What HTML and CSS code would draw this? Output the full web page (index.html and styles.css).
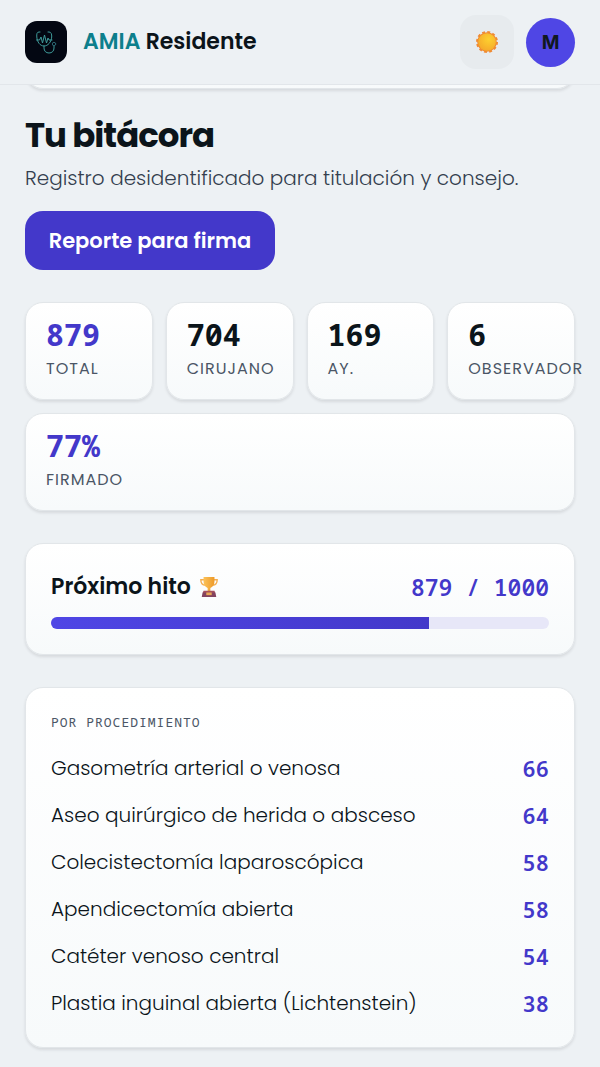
FILE: index.html
```
<!DOCTYPE html>
<html lang="es">
<head>
    <meta charset="UTF-8">
    <meta name="viewport" content="width=device-width, initial-scale=1.0">
    <title>AMIA Residente</title>
    <link rel="stylesheet" href="styles.css">
</head>
<body>
    <header class="topbar">
        <div class="brand">
            <span class="logo">
                <svg viewBox="0 0 42 42" width="42" height="42" fill="none" stroke="#3f9c9b" stroke-width="1" stroke-linecap="round" stroke-linejoin="round" aria-hidden="true">
                    <path d="M15 11h-1c-2 0-2.500 2-2.200 5 .4 5 3.200 9 7.200 9s7.300-4 7.700-9c.2-3-.7-5-2.700-5h-1"/>
                    <path d="M11.500 19h3l1.500-3 1.500 6 2-8 2 8 1.500-5 1 2h3"/>
                    <path d="M19 25v2c0 3 2 5 5 5s5-2 5-5v-2"/>
                    <circle cx="29" cy="23" r="1.700" stroke="#2b6570"/>
                </svg>
            </span>
            <span class="brand-name"><span class="brand-accent">AMIA</span> Residente</span>
        </div>
        <div class="actions">
            <button class="theme-button" type="button" aria-label="Cambiar tema">
                <svg viewBox="0 0 24 24" width="24" height="24" aria-hidden="true">
                    <defs>
                        <radialGradient id="sun" cx=".6" cy=".35" r=".7">
                            <stop offset="0" stop-color="#fdd02f"/>
                            <stop offset="1" stop-color="#f5a92a"/>
                        </radialGradient>
                    </defs>
                    <circle cx="12" cy="12" r="9.800" fill="#f08a32"/>
                    <circle cx="12" cy="12" r="9.700" fill="none" stroke="#f08a32" stroke-width="2.600" stroke-dasharray="2.800 2.280"/>
                    <circle cx="12" cy="12" r="8.800" fill="url(#sun)"/>
                </svg>
            </button>
            <button class="avatar" type="button">M</button>
        </div>
    </header>

    <main class="content">
        <div class="card last-card"></div>

        <section class="intro">
            <h1>Tu bitácora</h1>
            <p>Registro desidentificado para titulación y consejo.</p>
            <button class="report-button" type="button">Reporte para firma</button>
        </section>

        <section class="stats">
            <div class="card stat">
                <span class="stat-value accent">879</span>
                <span class="stat-label">Total</span>
            </div>
            <div class="card stat">
                <span class="stat-value">704</span>
                <span class="stat-label">Cirujano</span>
            </div>
            <div class="card stat">
                <span class="stat-value">169</span>
                <span class="stat-label">Ay.</span>
            </div>
            <div class="card stat">
                <span class="stat-value">6</span>
                <span class="stat-label">Observador</span>
            </div>
            <div class="card stat stat-wide">
                <span class="stat-value accent">77%</span>
                <span class="stat-label">Firmado</span>
            </div>
        </section>

        <section class="card milestone">
            <div class="milestone-head">
                <h2>Próximo hito
                    <svg viewBox="0 0 22 24" width="20" height="22" aria-hidden="true">
                        <defs>
                            <linearGradient id="cup" x1="0" x2="1">
                                <stop offset="0" stop-color="#fbc25a"/>
                                <stop offset="1" stop-color="#ee9a28"/>
                            </linearGradient>
                        </defs>
                        <path d="M6 4H2c0 4 2 6 5 6M16 4h4c0 4-2 6-5 6" fill="none" stroke="#f4ad4e" stroke-width="1.500"/>
                        <path d="M5 1h12v5c0 4-2 6-4.500 7v4h-3v-4C7 12 5 10 5 6Z" fill="url(#cup)"/>
                        <path d="M5 16h12l1 3H4Z" fill="#a8505c"/>
                        <path d="M4 18h14l1 5H3Z" fill="#83435f"/>
                        <path d="M8 18h6v3H8Z" fill="#e9a856"/>
                    </svg>
                </h2>
                <span class="milestone-count">879 / 1000</span>
            </div>
            <div class="progress" role="progressbar" aria-label="Próximo hito" aria-valuemin="500" aria-valuemax="1000" aria-valuenow="879">
                <div class="progress-fill" style="width: 76%"></div>
            </div>
        </section>

        <section class="card procedures">
            <h3>Por procedimiento</h3>
            <ul>
                <li><span>Gasometría arterial o venosa</span><b>66</b></li>
                <li><span>Aseo quirúrgico de herida o absceso</span><b>64</b></li>
                <li><span>Colecistectomía laparoscópica</span><b>58</b></li>
                <li><span>Apendicectomía abierta</span><b>58</b></li>
                <li><span>Catéter venoso central</span><b>54</b></li>
                <li><span>Plastia inguinal abierta (Lichtenstein)</span><b>38</b></li>
            </ul>
        </section>
    </main>
</body>
</html>
```
FILE: styles.css
```
* {
    box-sizing: border-box;
}

body {
    margin: 0;
    font-family: Poppins, Inter, sans-serif;
    background-color: #edf1f4;
    color: #0b141a;
}

h1, h2, h3, p, ul {
    margin: 0;
    padding: 0;
}

button {
    border: none;
    padding: 0;
    font-family: inherit;
    cursor: pointer;
}

/* Top bar */
.topbar {
    position: sticky;
    top: 0;
    z-index: 1;
    display: flex;
    align-items: center;
    justify-content: space-between;
    height: 85px;
    padding: 0 25px;
    background-color: #edf1f4;
    border-bottom: 1px solid #e2e6ea;
}

.brand,
.actions {
    display: flex;
    align-items: center;
}

.brand {
    gap: 16px;
}

.actions {
    gap: 12px;
}

.logo {
    width: 42px;
    height: 42px;
    border-radius: 12px;
    background-color: #030712;
}

.brand-name {
    font-size: 22px;
    line-height: 30px;
    font-weight: 600;
}

.brand-accent {
    color: #0d7f8c;
}

.theme-button {
    display: flex;
    align-items: center;
    justify-content: center;
    width: 54px;
    height: 54px;
    border-radius: 16px;
    background-color: #e7ebee;
}

.avatar {
    width: 49px;
    height: 49px;
    border-radius: 50%;
    background-color: #4f46e5;
    color: #101820;
    font-family: Inter, sans-serif;
    font-size: 19px;
    font-weight: 700;
}

/* Cards */
.content {
    padding: 0 25px 19px;
}

.card {
    border: 1px solid #e2e6e9;
    border-radius: 18px;
    background: linear-gradient(#ffffff, #f7fafb);
    box-shadow: 0 2px 3px rgba(16, 24, 32, 0.1);
}

/* Scrolled under the top bar, only its bottom edge shows */
.last-card {
    height: 60px;
    margin-top: -56px;
}

/* Intro */
.intro {
    padding-top: 21px;
    margin-bottom: 32px;
}

h1 {
    font-size: 34px;
    line-height: 51px;
    font-weight: 700;
    letter-spacing: -1px;
}

.intro p {
    font-size: 20px;
    line-height: 34px;
    font-weight: 300;
    color: #343f4f;
}

.report-button {
    margin-top: 16px;
    width: 250px;
    height: 59px;
    border-radius: 18px;
    background-color: #4338ca;
    color: #ffffff;
    font-size: 21px;
    font-weight: 600;
}

/* Stats */
.stats {
    display: grid;
    grid-template-columns: repeat(4, minmax(0, 1fr));
    gap: 13px;
    margin-bottom: 32px;
}

.stat {
    display: flex;
    flex-direction: column;
    padding: 14px 20px;
}

.stat-wide {
    grid-column: 1 / -1;
}

.stat-value {
    font-family: "Noto Sans Mono", "DejaVu Sans Mono", monospace;
    font-size: 30px;
    line-height: 35px;
    font-weight: 700;
}

.accent {
    color: #4338ca;
}

.stat-label {
    font-size: 16px;
    line-height: 33px;
    letter-spacing: 1px;
    text-transform: uppercase;
    color: #4b5666;
}

/* Milestone */
.milestone {
    padding: 25px;
    margin-bottom: 32px;
}

.milestone-head {
    display: flex;
    align-items: center;
    justify-content: space-between;
    margin-bottom: 12px;
}

h2 {
    display: flex;
    align-items: center;
    gap: 8px;
    font-size: 22px;
    line-height: 36px;
    font-weight: 600;
}

.milestone-count {
    font-family: "Noto Sans Mono", "DejaVu Sans Mono", monospace;
    font-size: 23px;
    line-height: 34px;
    font-weight: 600;
    color: #4338ca;
}

.progress {
    height: 12px;
    border-radius: 6px;
    overflow: hidden;
    background-color: #e7e7f8;
}

.progress-fill {
    height: 100%;
    background: linear-gradient(90deg, #4f46e5, #4338ca);
}

/* Procedures */
.procedures {
    padding: 24px 25px 20px;
}

h3 {
    margin-bottom: 13px;
    font-family: "Noto Sans Mono", "DejaVu Sans Mono", monospace;
    font-size: 13px;
    line-height: 20px;
    font-weight: 400;
    letter-spacing: 1px;
    text-transform: uppercase;
    color: #4b5666;
}

.procedures ul {
    list-style: none;
}

.procedures li {
    display: flex;
    align-items: center;
    justify-content: space-between;
    font-size: 20px;
    line-height: 47px;
    font-weight: 300;
}

.procedures b {
    font-family: "Noto Sans Mono", "DejaVu Sans Mono", monospace;
    font-size: 22px;
    font-weight: 600;
    color: #4338ca;
}
```
